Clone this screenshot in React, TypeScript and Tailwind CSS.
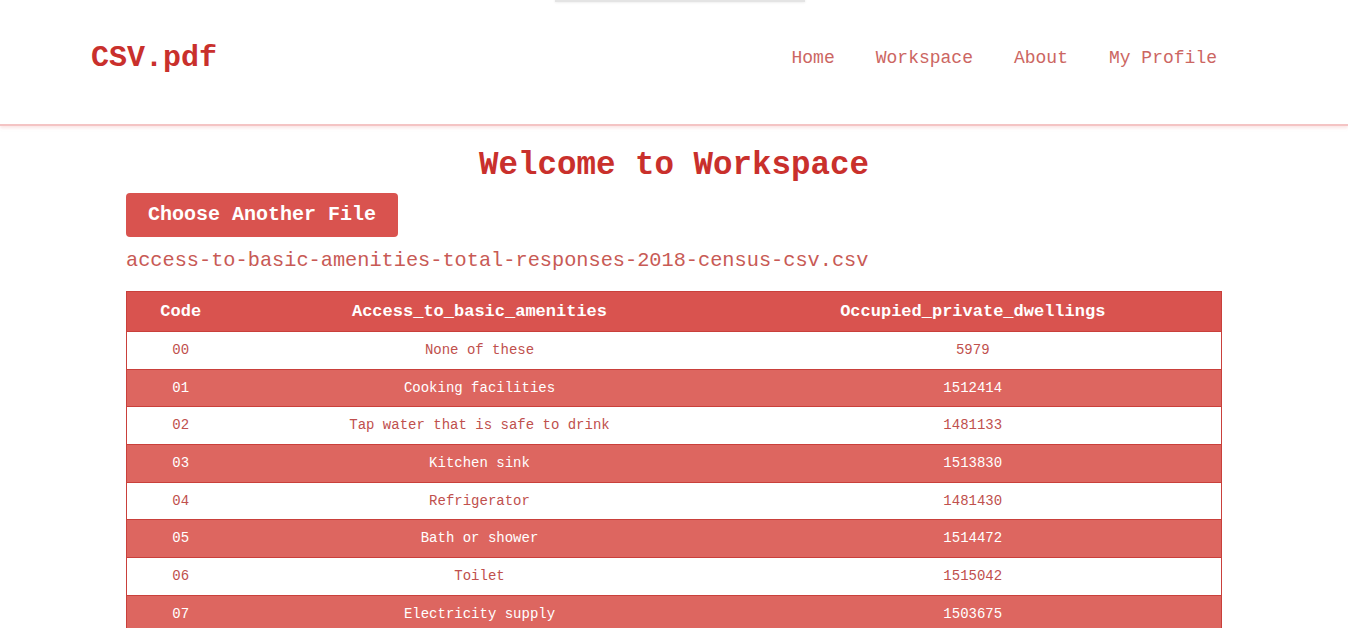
import React from "react";

const rows: [string, string, string][] = [
  ["00", "None of these", "5979"],
  ["01", "Cooking facilities", "1512414"],
  ["02", "Tap water that is safe to drink", "1481133"],
  ["03", "Kitchen sink", "1513830"],
  ["04", "Refrigerator", "1481430"],
  ["05", "Bath or shower", "1514472"],
  ["06", "Toilet", "1515042"],
  ["07", "Electricity supply", "1503675"],
];

export default function App() {
  return (
    <div className="relative min-h-screen bg-white font-['Liberation_Mono','Courier_New',monospace] overflow-hidden">
      <div className="absolute left-[555px] top-0 h-[2px] w-[250px] bg-[#e4e4e4] shadow-[0_0_3px_#ddd]" />
      <header className="flex h-[126px] items-center justify-between border-b-[2px] border-[#f4c4c4] pl-[91px] pr-[131px] shadow-[0_2px_3px_rgba(240,180,180,0.35)]">
        <div className="text-[30px] font-bold leading-none text-[#c9302c] -mt-[9px]">CSV.pdf</div>
        <nav className="flex gap-[41px] text-[18px] leading-none text-[#cc6662] -mt-[9px]">
          <span>Home</span>
          <span>Workspace</span>
          <span>About</span>
          <span>My Profile</span>
        </nav>
      </header>
      <main className="mx-auto w-[1096px]">
        <h1 className="mt-[22px] text-center text-[32.5px] font-bold leading-[36px] text-[#c9302c]">
          Welcome to Workspace
        </h1>
        <button className="mt-[9px] h-[44px] w-[272px] rounded-[4px] bg-[#d9534f] text-[20px] font-bold text-white">
          Choose Another File
        </button>
        <div className="mt-[12px] text-[20.3px] leading-[24px] text-[#c85a55]">
          access-to-basic-amenities-total-responses-2018-census-csv.csv
        </div>
        <table className="mt-[18px] w-full border-collapse border border-[#c9403b]">
          <thead>
            <tr className="h-[40px] bg-[#d9534f] text-white">
              <th className="w-[108px] text-[17px] font-bold border-b border-[#c9403b]">Code</th>
              <th className="w-[490px] text-[17px] font-bold border-b border-[#c9403b]">Access_to_basic_amenities</th>
              <th className="text-[17px] font-bold border-b border-[#c9403b]">Occupied_private_dwellings</th>
            </tr>
          </thead>
          <tbody>
            {rows.map((r, i) => (
              <tr
                key={r[0]}
                className={
                  "h-[37.7px] border-b border-[#c9403b] text-[14px] " +
                  (i % 2 === 0 ? "bg-white text-[#c0504d]" : "bg-[#dd6660] text-white")
                }
              >
                <td className="text-center">{r[0]}</td>
                <td className="text-center">{r[1]}</td>
                <td className="text-center">{r[2]}</td>
              </tr>
            ))}
          </tbody>
        </table>
      </main>
    </div>
  );
}
